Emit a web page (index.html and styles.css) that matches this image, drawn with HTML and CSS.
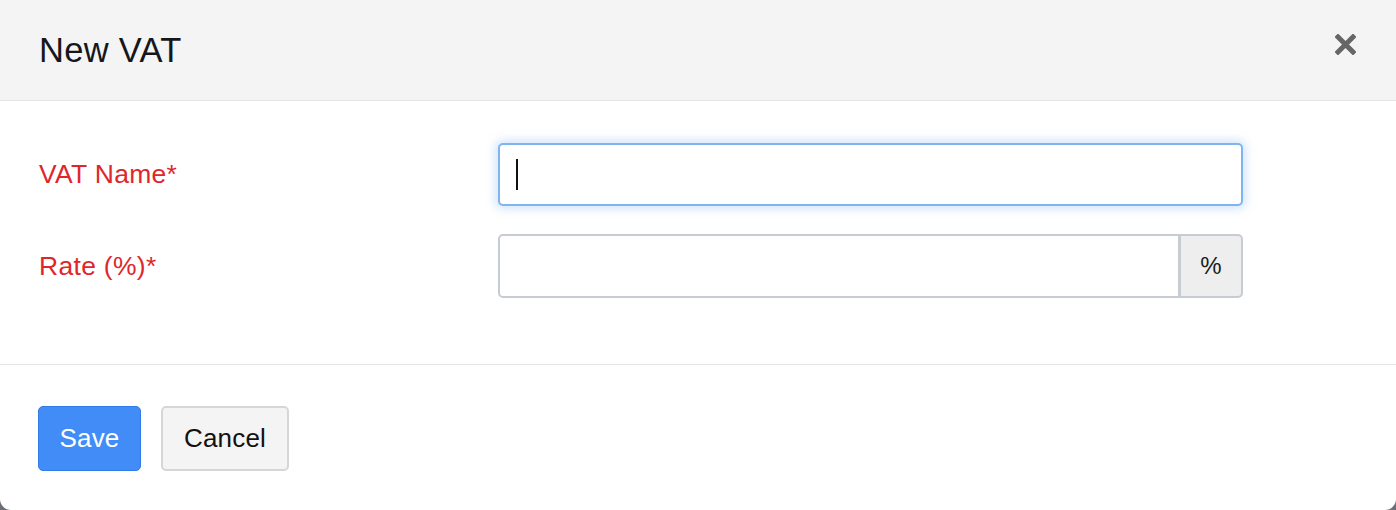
FILE: index.html
```html
<!DOCTYPE html>
<html lang="en">
<head>
    <meta charset="UTF-8">
    <meta name="viewport" content="width=device-width, initial-scale=1.0">
    <title>New VAT</title>
    <link rel="stylesheet" href="styles.css">
</head>
<body>
    <div class="modal">
        <div class="modal-header">
            <h1>New VAT</h1>
            <button type="button" class="close" aria-label="Close">
                <svg width="21" height="21" viewBox="0 0 21 21">
                    <path d="M3 3 L18 18 M18 3 L3 18" stroke="#666" stroke-width="5" stroke-linecap="square"/>
                </svg>
            </button>
        </div>
        <form class="modal-body">
            <label for="vatName">VAT Name*</label>
            <div class="field">
                <input type="text" id="vatName" class="input focused">
                <span class="caret"></span>
            </div>
            <label for="rate">Rate (%)*</label>
            <div class="field group">
                <input type="text" id="rate" class="input">
                <span class="addon">%</span>
            </div>
        </form>
        <div class="modal-footer">
            <button type="button" class="btn btn-primary">Save</button>
            <button type="button" class="btn btn-default">Cancel</button>
        </div>
    </div>
</body>
</html>
```

FILE: styles.css
```css
html, body {
    margin: 0;
    padding: 0;
}
body {
    background-color: #6c6e79;
    font-family: "Liberation Sans", Arial, sans-serif;
    color: #111;
}
.modal {
    width: 1396px;
    height: 510px;
    background-color: white;
    border-radius: 0 0 11px 11px;
    overflow: hidden;
}
.modal-header {
    height: 100px;
    background-color: #f4f4f4;
    border-bottom: 1px solid #e5e5e5;
    display: flex;
    align-items: center;
    justify-content: space-between;
    padding: 0 40px 0 39px;
}
.modal-header h1 {
    margin: 0;
    font-size: 34.5px;
    font-weight: normal;
    letter-spacing: 0.3px;
    color: #15171a;
}
.close {
    background: none;
    border: none;
    padding: 0;
    width: 21px;
    height: 21px;
    margin-top: -12px;
    cursor: pointer;
}
.close svg {
    display: block;
}
.modal-body {
    display: grid;
    grid-template-columns: 459px 745px;
    row-gap: 28px;
    align-items: center;
    margin: 0;
    padding: 42px 39px 66px 39px;
}
label {
    font-size: 26.5px;
    letter-spacing: 0.3px;
    color: #e0262b;
}
.field {
    position: relative;
    display: flex;
}
.input {
    box-sizing: border-box;
    flex: 1;
    height: 63px;
    padding: 0 16px;
    border: 2px solid #c6ccd2;
    border-radius: 5px;
    font-family: inherit;
    font-size: 25px;
    outline: none;
    background-color: white;
}
.input.focused {
    border-color: #7fb5ee;
    box-shadow: 0 0 10px 3px rgba(128, 180, 240, 0.35);
}
.caret {
    position: absolute;
    left: 18px;
    top: 16px;
    width: 2px;
    height: 31px;
    background-color: #111;
}
.group .input {
    border-radius: 5px 0 0 5px;
    height: 64px;
}
.addon {
    box-sizing: border-box;
    width: 63px;
    height: 64px;
    display: flex;
    align-items: center;
    justify-content: center;
    background-color: #eeeeee;
    border: 2px solid #c6ccd2;
    border-left: 1px solid #c6ccd2;
    border-radius: 0 5px 5px 0;
    font-size: 24px;
    color: #1a1d21;
}
.modal-footer {
    border-top: 1px solid #e5e5e5;
    display: flex;
    gap: 20px;
    padding: 41px 38px;
}
.btn {
    box-sizing: border-box;
    height: 65px;
    padding: 0;
    border-radius: 5px;
    font-family: inherit;
    font-size: 26px;
    letter-spacing: 0.2px;
    cursor: pointer;
}
.btn-primary {
    width: 103px;
    background-color: #428cf8;
    border: 1px solid #2f7ce6;
    color: white;
}
.btn-default {
    width: 128px;
    background-color: #f4f4f4;
    border: 2px solid #d6d6d6;
    color: #111;
}
```
